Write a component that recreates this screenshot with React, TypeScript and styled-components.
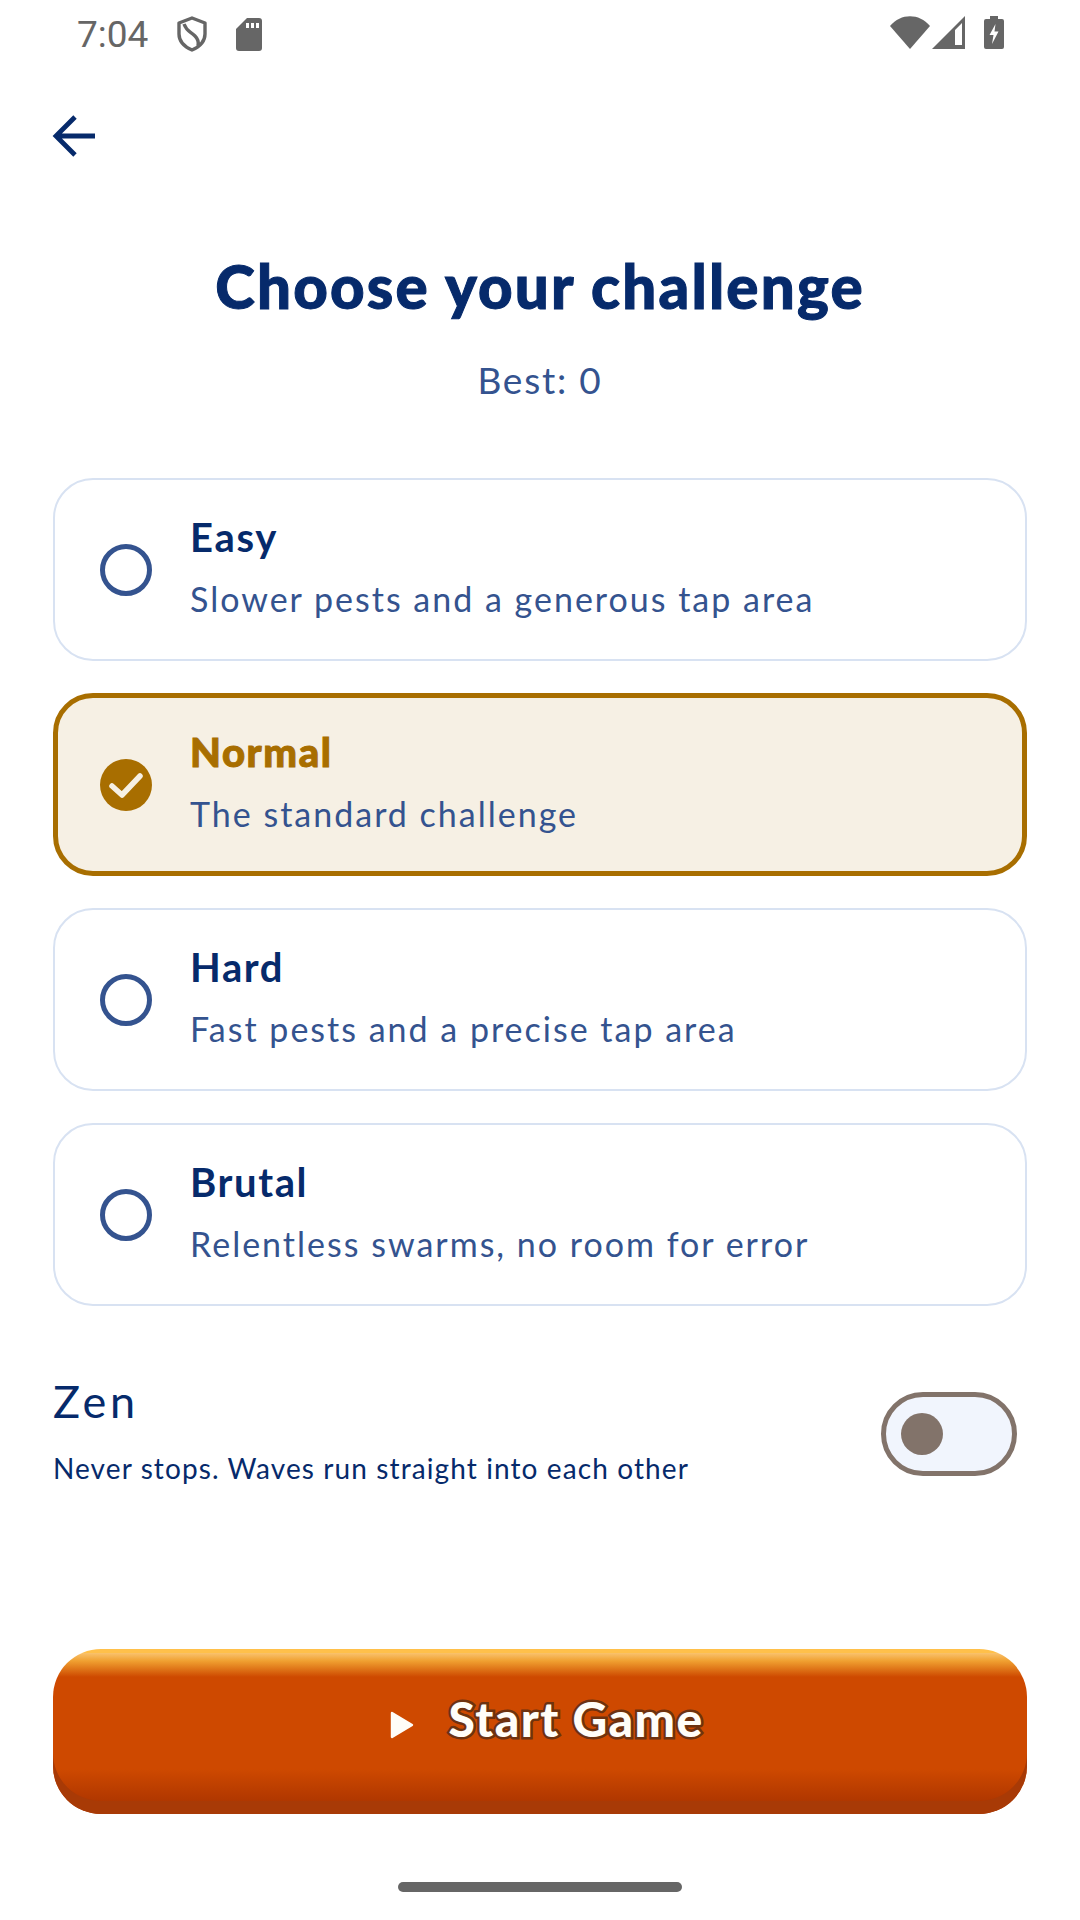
import { FC } from "react";
import styled, { createGlobalStyle } from "styled-components";

const GlobalStyle = createGlobalStyle`
  html, body {
    margin: 0;
    padding: 0;
    background: #ffffff;
  }
  * {
    box-sizing: border-box;
  }
`;

type Level = {
    name: string;
    hint: string;
    selected?: boolean;
};

const levels: Level[] = [
    { name: "Easy", hint: "Slower pests and a generous tap area" },
    { name: "Normal", hint: "The standard challenge", selected: true },
    { name: "Hard", hint: "Fast pests and a precise tap area" },
    { name: "Brutal", hint: "Relentless swarms, no room for error" },
];

const StatusBar: FC = () => (
    <StatusRow>
        <StatusGroup>
            <Clock>7:04</Clock>
            <svg width="30" height="36" viewBox="0 0 30 36">
                <path d="M15 2 L28 7 V18 C28 26 22 31 15 34 C8 31 2 26 2 18 V7 Z" fill="none" stroke="#666" strokeWidth="3.4" strokeLinejoin="round" />
                <path d="M7 8 C10 16 13 15 18 20 C21 23 22 26 21 30" fill="none" stroke="#666" strokeWidth="3.4" />
            </svg>
            <svg width="26" height="33" viewBox="0 0 26 33">
                <path d="M11 0 H23 A3 3 0 0 1 26 3 V30 A3 3 0 0 1 23 33 H3 A3 3 0 0 1 0 30 V11 Z" fill="#666" />
                <path d="M10 5 H13 V10 H10 Z M15 5 H18 V10 H15 Z M20 5 H23 V10 H20 Z" fill="#fff" />
            </svg>
        </StatusGroup>
        <StatusIcons>
            <svg width="40" height="33" viewBox="0 0 40 33">
                <path d="M0 10 C11 -3 29 -3 40 10 L20 33 Z" fill="#666" />
            </svg>
            <svg width="33" height="33" viewBox="0 0 33 33">
                <path fillRule="evenodd" d="M33 0 V33 H0 Z M30 7 L23 14 V29 H30 Z" fill="#666" />
            </svg>
            <svg width="20" height="33" viewBox="0 0 20 33">
                <path d="M6 0 H14 V3 H18 A2 2 0 0 1 20 5 V31 A2 2 0 0 1 18 33 H2 A2 2 0 0 1 0 31 V5 A2 2 0 0 1 2 3 H6 Z" fill="#666" />
                <path d="M11.5 8 L5.5 19 H9.5 L8 28 L14.5 15.5 H10.5 Z" fill="#fff" />
            </svg>
        </StatusIcons>
    </StatusRow>
);

const App: FC = () => {
    return (
        <Screen>
            <GlobalStyle />
            <StatusBar />
            <BackButton aria-label="back">
                <svg width="44" height="44" viewBox="0 0 44 44">
                    <path d="M43 22 H4 M23 3 L4 22 L23 41" fill="none" stroke="#062a6b" strokeWidth="4.8" />
                </svg>
            </BackButton>
            <Title>Choose your challenge</Title>
            <Best>Best: 0</Best>
            <LevelList>
                {levels.map((level) => (
                    <LevelCard key={level.name} $selected={level.selected}>
                        {level.selected ? (
                            <svg width="52" height="52" viewBox="0 0 52 52">
                                <circle cx="26" cy="26" r="26" fill="#a86e00" />
                                <path d="M12 27 L22 36 L40 17" fill="none" stroke="#f6f0e4" strokeWidth="5.5" strokeLinecap="round" strokeLinejoin="round" />
                            </svg>
                        ) : (
                            <Radio />
                        )}
                        <LevelText>
                            <LevelName $selected={level.selected}>{level.name}</LevelName>
                            <LevelHint>{level.hint}</LevelHint>
                        </LevelText>
                    </LevelCard>
                ))}
            </LevelList>
            <ZenRow>
                <ZenText>
                    <ZenTitle>Zen</ZenTitle>
                    <ZenHint>Never stops. Waves run straight into each other</ZenHint>
                </ZenText>
                <Toggle>
                    <Knob />
                </Toggle>
            </ZenRow>
            <StartButton>
                <svg width="24" height="28" viewBox="0 0 24 28">
                    <path d="M2 2 L22 14 L2 26 Z" fill="#fffdf8" stroke="#fffdf8" strokeWidth="2.4" strokeLinejoin="round" />
                </svg>
                <span>Start Game</span>
            </StartButton>
            <HomeBar />
        </Screen>
    );
};

const Screen = styled.div`
    display: flex;
    flex-direction: column;
    width: 1080px;
    height: 1920px;
    background: #ffffff;
    font-family: "Lato", "Noto Sans", sans-serif;
    overflow: hidden;
`;

const StatusRow = styled.div`
    display: flex;
    align-items: center;
    justify-content: space-between;
    height: 66px;
    padding: 2px 76px 0 77px;
`;

const StatusGroup = styled.div`
    display: flex;
    align-items: center;
    gap: 29px;
`;

const StatusIcons = styled(StatusGroup)`
    gap: 2px;
    margin-top: -4px;

    svg:last-child {
        margin-left: 17px;
    }
`;

const Clock = styled.span`
    font-family: "Roboto", sans-serif;
    font-size: 37px;
    color: #666666;
`;

const BackButton = styled.div`
    display: flex;
    align-items: center;
    height: 44px;
    margin: 48px 0 0 52px;
`;

const Title = styled.h1`
    margin: 86px 0 0;
    height: 84px;
    font-size: 60px;
    line-height: 84px;
    font-weight: 900;
    letter-spacing: 2.2px;
    -webkit-text-stroke: 1px #062a6b;
    text-align: center;
    color: #062a6b;
`;

const Best = styled.div`
    margin-top: 27px;
    height: 50px;
    font-size: 37px;
    line-height: 50px;
    letter-spacing: 1.8px;
    text-align: center;
    color: #34538f;
`;

const LevelList = styled.div`
    display: flex;
    flex-direction: column;
    gap: 32px;
    margin: 73px 53px 0;
`;

const LevelCard = styled.div<{ $selected?: boolean }>`
    display: flex;
    align-items: center;
    gap: 38px;
    height: 183px;
    border-radius: 40px;
    border: ${(p) => (p.$selected ? "5px solid #a86e00" : "2.5px solid #d8e2f2")};
    padding-left: ${(p) => (p.$selected ? "42px" : "45px")};
    background: ${(p) => (p.$selected ? "#f6f0e4" : "#ffffff")};
`;

const Radio = styled.div`
    width: 52px;
    height: 52px;
    border-radius: 50%;
    border: 5px solid #34538f;
`;

const LevelText = styled.div`
    display: flex;
    flex-direction: column;
    gap: 16px;
    padding-bottom: 4px;
`;

const LevelName = styled.div<{ $selected?: boolean }>`
    font-size: 40px;
    line-height: 46px;
    font-weight: ${(p) => (p.$selected ? 900 : 700)};
    letter-spacing: 1.6px;
    color: ${(p) => (p.$selected ? "#a86e00" : "#062a6b")};
    -webkit-text-stroke: ${(p) => (p.$selected ? "1px #a86e00" : "0")};
`;

const LevelHint = styled.div`
    font-size: 34px;
    line-height: 46px;
    letter-spacing: 2px;
    color: #34538f;
`;

const ZenRow = styled.div`
    display: flex;
    align-items: center;
    justify-content: space-between;
    margin: 67px 63px 0 53px;
`;

const ZenText = styled.div`
    display: flex;
    flex-direction: column;
    gap: 20px;
`;

const ZenTitle = styled.div`
    font-size: 45px;
    line-height: 56px;
    letter-spacing: 3.6px;
    color: #062a6b;
`;

const ZenHint = styled.div`
    font-size: 28px;
    line-height: 38px;
    letter-spacing: 1.1px;
    color: #062a6b;
`;

const Toggle = styled.div`
    display: flex;
    align-items: center;
    width: 136px;
    height: 84px;
    margin-top: 8px;
    padding-left: 15px;
    border-radius: 42px;
    border: 5px solid #82736a;
    background: #f1f5fd;
`;

const Knob = styled.div`
    width: 42px;
    height: 42px;
    border-radius: 50%;
    background: #82736a;
`;

const StartButton = styled.div`
    display: flex;
    align-items: center;
    justify-content: center;
    gap: 34px;
    height: 165px;
    margin: 162px 53px 0;
    padding: 0 0 14px 14px;
    border-radius: 48px;
    background: linear-gradient(
        180deg,
        #ffc04a 0,
        #ffc04a 4px,
        #f9c26d 4px,
        #f0a030 12px,
        #ce4900 28px,
        #ce4900 120px,
        #b03700 152px
    );
    box-shadow: inset 0 -13px 0 #a83a06;

    span {
        margin-bottom: 13px;
        font-size: 48px;
        font-weight: 900;
        letter-spacing: 1.4px;
        color: #fffdf8;
        -webkit-text-stroke: 5px #6e3210;
        paint-order: stroke fill;
        text-shadow: 0 2px 0 #6e3210;
    }
`;

const HomeBar = styled.div`
    width: 284px;
    height: 10px;
    margin: 68px auto 0;
    border-radius: 5px;
    background: #666666;
`;

export default App;
